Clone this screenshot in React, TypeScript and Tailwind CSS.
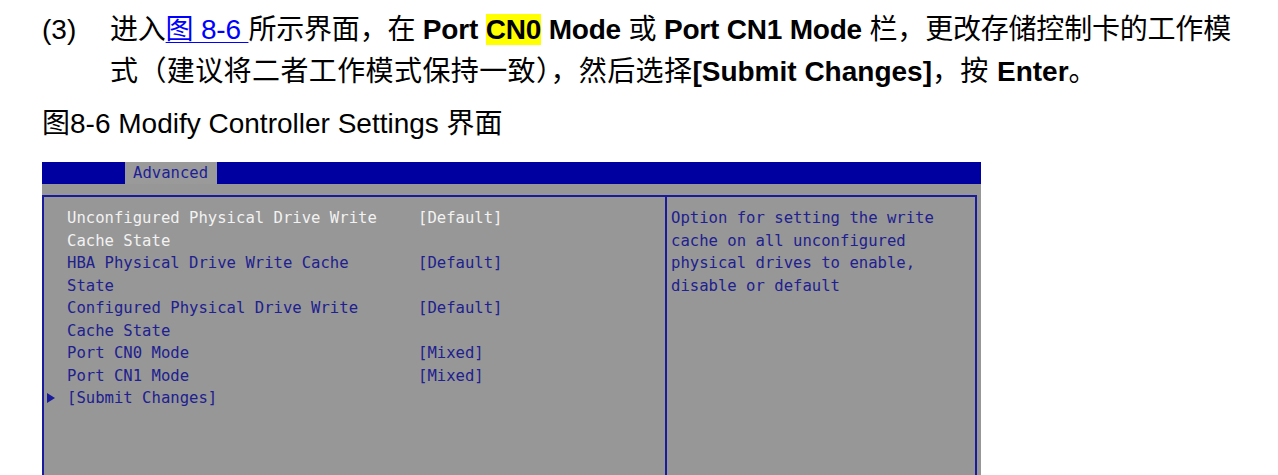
import React from "react";

const rows: { lines: string[]; value?: string; active?: boolean; arrow?: boolean }[] = [
  { lines: ["Unconfigured Physical Drive Write", "Cache State"], value: "[Default]", active: true },
  { lines: ["HBA Physical Drive Write Cache", "State"], value: "[Default]" },
  { lines: ["Configured Physical Drive Write", "Cache State"], value: "[Default]" },
  { lines: ["Port CN0 Mode"], value: "[Mixed]" },
  { lines: ["Port CN1 Mode"], value: "[Mixed]" },
  { lines: ["[Submit Changes]"], arrow: true },
];

const help = [
  "Option for setting the write",
  "cache on all unconfigured",
  "physical drives to enable,",
  "disable or default",
];

export default function App() {
  return (
    <div className="w-[1278px] h-[475px] overflow-hidden bg-white text-black">
      <div
        className="pl-[42px] text-[28px] leading-[42px] pt-[9px]"
        style={{ fontFamily: '"Liberation Sans", "Noto Sans CJK SC", sans-serif' }}
      >
        <div className="flex whitespace-nowrap">
          <span className="w-[68px]">(3)</span>
          <span className="tracking-[-0.2px]">
            进入<span className="text-[#0000ff] underline decoration-1 underline-offset-[3px]">图 8-6 </span>所示界面，在{" "}
            <b>Port </b>
            <b className="bg-[#ffff00]">CN0</b>
            <b> Mode</b> 或 <b>Port CN1 Mode</b> 栏，更改存储控制卡的工作模
          </span>
        </div>
        <div className="flex whitespace-nowrap">
          <span className="w-[68px]" />
          <span className="tracking-[0.4px]">
            式（建议将二者工作模式保持一致），然后选择<b className="tracking-normal">[Submit Changes]</b>，按 <b className="tracking-normal">Enter</b>。
          </span>
        </div>
        <div className="mt-[10px] whitespace-nowrap">图8-6 Modify Controller Settings 界面</div>
      </div>

      <div
        className="ml-[42px] mt-[17px] w-[939px] bg-[#979797] text-[15.6px] leading-[22.5px]"
        style={{ fontFamily: '"DejaVu Sans Mono", "Liberation Mono", monospace' }}
      >
        <div className="h-[22px] bg-[#0000a0] flex">
          <div className="ml-[83px] w-[92px] bg-[#9a9a9a] text-[#1e1e96] pl-[8px] leading-[23px]">Advanced</div>
        </div>
        <div className="h-[11px]" />
        <div className="flex h-[300px]">
          <div className="w-[623px] border-l-2 border-t-2 border-[#1a1a9c] pt-[10px]">
            {rows.map((r, i) => (
              <div key={i} className="flex relative">
                {r.arrow && (
                  <svg className="absolute left-[3px] top-[6px]" width="8" height="10" viewBox="0 0 8 10">
                    <polygon points="0,0 8,5 0,10" fill="#1a1a9c" />
                  </svg>
                )}
                <div className={`w-[374px] pl-[23px] ${r.active ? "text-[#f2f2f2]" : "text-[#20208f]"}`}>
                  {r.lines.map((l, j) => (
                    <div key={j} className="whitespace-pre">{l}</div>
                  ))}
                </div>
                <div className={`${r.active ? "text-[#f2f2f2]" : "text-[#20208f]"} whitespace-pre`}>{r.value}</div>
              </div>
            ))}
          </div>
          <div className="w-[312px] border-l-2 border-t-2 border-r-2 border-[#1a1a9c] pt-[10px] pl-[4px] text-[#20208f]">
            {help.map((h, i) => (
              <div key={i} className="whitespace-pre">{h}</div>
            ))}
          </div>
        </div>
      </div>
    </div>
  );
}
